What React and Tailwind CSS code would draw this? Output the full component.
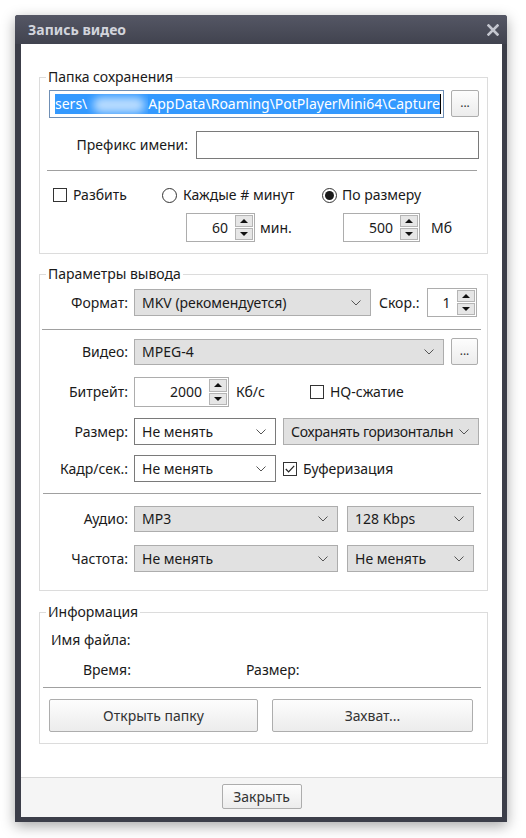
import React from "react";

const txt = "text-[14px] leading-[20px] text-[#1a1a1a]";

function Chevron() {
  return (
    <svg width="10" height="6" viewBox="0 0 10 6" className="shrink-0">
      <polyline points="0.5,0.5 5,5 9.5,0.5" fill="none" stroke="#555" strokeWidth="1" />
    </svg>
  );
}

function Combo({ className, text, gray = true, tight = false }) {
  return (
    <div
      className={`${className} flex items-center justify-between gap-[4px] pl-[7px] pr-[9px] border ${
        gray ? "bg-[#e1e1e1] border-[#adadad]" : "bg-white border-[#7a7a7a]"
      }`}
    >
      <span className={`${txt} whitespace-nowrap overflow-hidden min-w-0 ${tight ? "tracking-[-0.3px]" : ""}`}>
        {text}
      </span>
      <Chevron />
    </div>
  );
}

function Arrow({ down }) {
  return (
    <svg width="8" height="4" viewBox="0 0 8 4">
      <polygon points={down ? "0,0 8,0 4,4" : "0,4 8,4 4,0"} fill="#111" />
    </svg>
  );
}

function Spin({ className, value }) {
  return (
    <div className={`${className} flex border border-[#adadad] bg-white`}>
      <div className={`flex-1 flex items-center justify-end pr-[6px] ${txt}`}>{value}</div>
      <div className="w-[20px] flex flex-col gap-[1px] p-[1px]">
        <div className="flex-1 flex items-center justify-center bg-[#e6e6e6] border border-[#b5b5b5]">
          <Arrow />
        </div>
        <div className="flex-1 flex items-center justify-center bg-[#e6e6e6] border border-[#b5b5b5]">
          <Arrow down />
        </div>
      </div>
    </div>
  );
}

function Checkbox({ checked }) {
  return (
    <div className="w-[14px] h-[14px] border border-[#333] bg-white flex items-center justify-center shrink-0">
      {checked && (
        <svg width="10" height="8" viewBox="0 0 10 8">
          <polyline points="0.8,4 3.6,6.8 9.2,0.8" fill="none" stroke="#222" strokeWidth="1.2" />
        </svg>
      )}
    </div>
  );
}

function Radio({ checked }) {
  return (
    <div className="w-[15px] h-[15px] rounded-full border border-[#333] bg-white flex items-center justify-center shrink-0">
      {checked && <div className="w-[9px] h-[9px] rounded-full bg-[#1a1a1a]" />}
    </div>
  );
}

function Button({ className, children }) {
  return (
    <div
      className={`${className} flex items-center justify-center border border-[#adadad] rounded-[2px] bg-linear-to-b from-[#fdfdfd] to-[#ececec] text-[14px] leading-[20px] text-[#333]`}
    >
      {children}
    </div>
  );
}

function Group({ title, className, children }) {
  return (
    <fieldset className={`min-w-0 border border-[#dcdcdc] pl-[9px] pr-[8px] ${className}`}>
      <legend className="-ml-[3px] px-[2px] h-[18px] text-[14px] leading-[18px] text-[#1a1a1a]">{title}</legend>
      {children}
    </fieldset>
  );
}

function Label({ children }) {
  return <span className={`w-[79px] shrink-0 text-right whitespace-nowrap ${txt}`}>{children}</span>;
}

export default function App() {
  return (
    <div className="w-[526px] h-[838px] bg-white font-['Noto_Sans',sans-serif] pt-[15px] pl-[15px]">
      <div className="w-[492px] h-[807px] flex flex-col bg-[#3c3e49] rounded-t-[3px] pl-[6px] pr-[5px] pb-[5px] shadow-[0_4px_14px_rgba(0,0,0,0.35)]">
        {/* title bar */}
        <div className="h-[29px] shrink-0 -ml-[6px] -mr-[5px] pl-[13px] pr-[8px] flex items-center justify-between rounded-t-[3px] bg-linear-to-b from-[#555765] to-[#41434f]">
          <span className="text-[14px] font-bold text-[#d2d4dc]">Запись видео</span>
          <svg width="12" height="12" viewBox="0 0 12 12">
            <path d="M1.5 1.5 L10.5 10.5 M10.5 1.5 L1.5 10.5" stroke="#c4c6cf" strokeWidth="2.6" strokeLinecap="square" />
          </svg>
        </div>

        {/* client */}
        <div className="flex-1 flex flex-col bg-white min-h-0">
          <div className="flex-1 pt-[24px] pl-[18px] pr-[14px] flex flex-col">
            {/* Group 1 */}
            <Group title="Папка сохранения" className="pt-[4px] pb-[11px]">
              <div className="flex h-[28px] gap-[7px]">
                <div className="flex-1 min-w-0 flex items-center border border-[#6f8fb5] overflow-hidden pl-[5px]">
                  <span className="bg-[#3399ff] text-white text-[14px] leading-[20px] whitespace-nowrap flex items-center">
                    sers\
                    <span className="inline-block w-[61px] h-[20px] relative overflow-hidden">
                      <span className="absolute left-[6px] top-[3px] w-[52px] h-[16px] rounded-full bg-[#b9dcff] blur-[4px]" />
                    </span>
                    AppData\Roaming\PotPlayerMini64\Capture
                  </span>
                  <span className="w-[1px] h-[20px] bg-black shrink-0" />
                </div>
                <Button className="w-[28px] h-[27px] shrink-0">
                  <span className="text-[12px] leading-none -mt-[2px]">...</span>
                </Button>
              </div>

              <div className="flex items-center gap-[8px] mt-[13px] h-[28px]">
                <span className={`w-[139px] shrink-0 text-right ${txt}`}>Префикс имени:</span>
                <div className="flex-1 min-w-0 h-[28px] border border-[#7a7a7a] bg-white" />
              </div>

              <div className="h-[1px] bg-[#a0a0a0] mt-[11px] -ml-[2px] mr-[2px]" />

              <div className="flex items-center h-[20px] mt-[14px]">
                <div className="w-[109px] ml-[4px] flex items-center gap-[6px]">
                  <Checkbox />
                  <span className={txt}>Разбить</span>
                </div>
                <div className="w-[160px] flex items-center gap-[6px]">
                  <Radio />
                  <span className={txt}>Каждые # минут</span>
                </div>
                <div className="flex items-center gap-[5px]">
                  <Radio checked />
                  <span className={txt}>По размеру</span>
                </div>
              </div>

              <div className="flex items-center h-[29px] mt-[8px] ml-[137px]">
                <div className="w-[157px] flex items-center gap-[5px]">
                  <Spin className="w-[69px] h-[29px]" value="60" />
                  <span className={txt}>мин.</span>
                </div>
                <Spin className="w-[77px] h-[29px]" value="500" />
                <span className={`${txt} ml-[11px]`}>Мб</span>
              </div>
            </Group>

            {/* Group 2 */}
            <Group title="Параметры вывода" className="mt-[11px] pt-[5px] pb-[18px]">
              <div className="flex items-center h-[29px]">
                <Label>Формат:</Label>
                <Combo className="ml-[6px] w-[237px] h-[27px]" text="MKV (рекомендуется)" />
                <span className={`${txt} ml-[8px]`}>Скор.:</span>
                <Spin className="ml-[8px] w-[50px] h-[29px]" value="1" />
              </div>

              <div className="h-[1px] bg-[#a0a0a0] mt-[12px] -ml-[7px] -mr-[2px]" />

              <div className="flex items-center h-[27px] mt-[8px]">
                <Label>Видео:</Label>
                <Combo className="ml-[6px] w-[310px] h-[26px]" text="MPEG-4" />
                <Button className="ml-[7px] w-[27px] h-[27px]">
                  <span className="text-[12px] leading-none -mt-[2px]">...</span>
                </Button>
              </div>

              <div className="flex items-center h-[30px] mt-[12px]">
                <Label>Битрейт:</Label>
                <Spin className="ml-[6px] w-[95px] h-[30px]" value="2000" />
                <span className={`${txt} ml-[7px] w-[74px]`}>Кб/с</span>
                <Checkbox />
                <span className={`${txt} ml-[6px]`}>HQ-сжатие</span>
              </div>

              <div className="flex items-center h-[27px] mt-[11px]">
                <Label>Размер:</Label>
                <Combo className="ml-[6px] w-[142px] h-[27px]" text="Не менять" gray={false} />
                <Combo className="ml-[7px] w-[196px] h-[27px]" text="Сохранять горизонтальн" tight />
              </div>

              <div className="flex items-center h-[27px] mt-[10px]">
                <Label>Кадр/сек.:</Label>
                <Combo className="ml-[6px] w-[142px] h-[27px]" text="Не менять" gray={false} />
                <div className="ml-[7px]">
                  <Checkbox checked />
                </div>
                <span className={`${txt} ml-[6px]`}>Буферизация</span>
              </div>

              <div className="h-[1px] bg-[#a0a0a0] mt-[11px] -ml-[6px] -mr-[2px]" />

              <div className="flex items-center h-[26px] mt-[12px]">
                <Label>Аудио:</Label>
                <Combo className="ml-[6px] w-[204px] h-[26px]" text="MP3" />
                <Combo className="ml-[9px] w-[127px] h-[26px]" text="128 Kbps" />
              </div>

              <div className="flex items-center h-[27px] mt-[13px]">
                <Label>Частота:</Label>
                <Combo className="ml-[6px] w-[204px] h-[27px]" text="Не менять" />
                <Combo className="ml-[9px] w-[127px] h-[27px]" text="Не менять" />
              </div>
            </Group>

            {/* Group 3 */}
            <Group title="Информация" className="mt-[12px] pt-[9px] pb-[11px]">
              <div className={`${txt} ml-[2px] h-[20px]`}>Имя файла:</div>
              <div className="flex h-[20px] mt-[10px]">
                <span className={`${txt} ml-[34px] w-[163px]`}>Время:</span>
                <span className={txt}>Размер:</span>
              </div>
              <div className="h-[1px] bg-[#a0a0a0] mt-[7px] -ml-[6px] -mr-[2px]" />
              <div className="flex h-[33px] mt-[11px] gap-[14px]">
                <Button className="w-[209px] h-[33px]">Открыть папку</Button>
                <Button className="w-[201px] h-[33px]">Захват...</Button>
              </div>
            </Group>
          </div>

          {/* footer */}
          <div className="h-[40px] shrink-0 border-t border-[#d8d8d8] bg-[#f5f5f5] flex justify-center pt-[6px]">
            <Button className="w-[80px] h-[25px]">Закрыть</Button>
          </div>
        </div>
      </div>
    </div>
  );
}
